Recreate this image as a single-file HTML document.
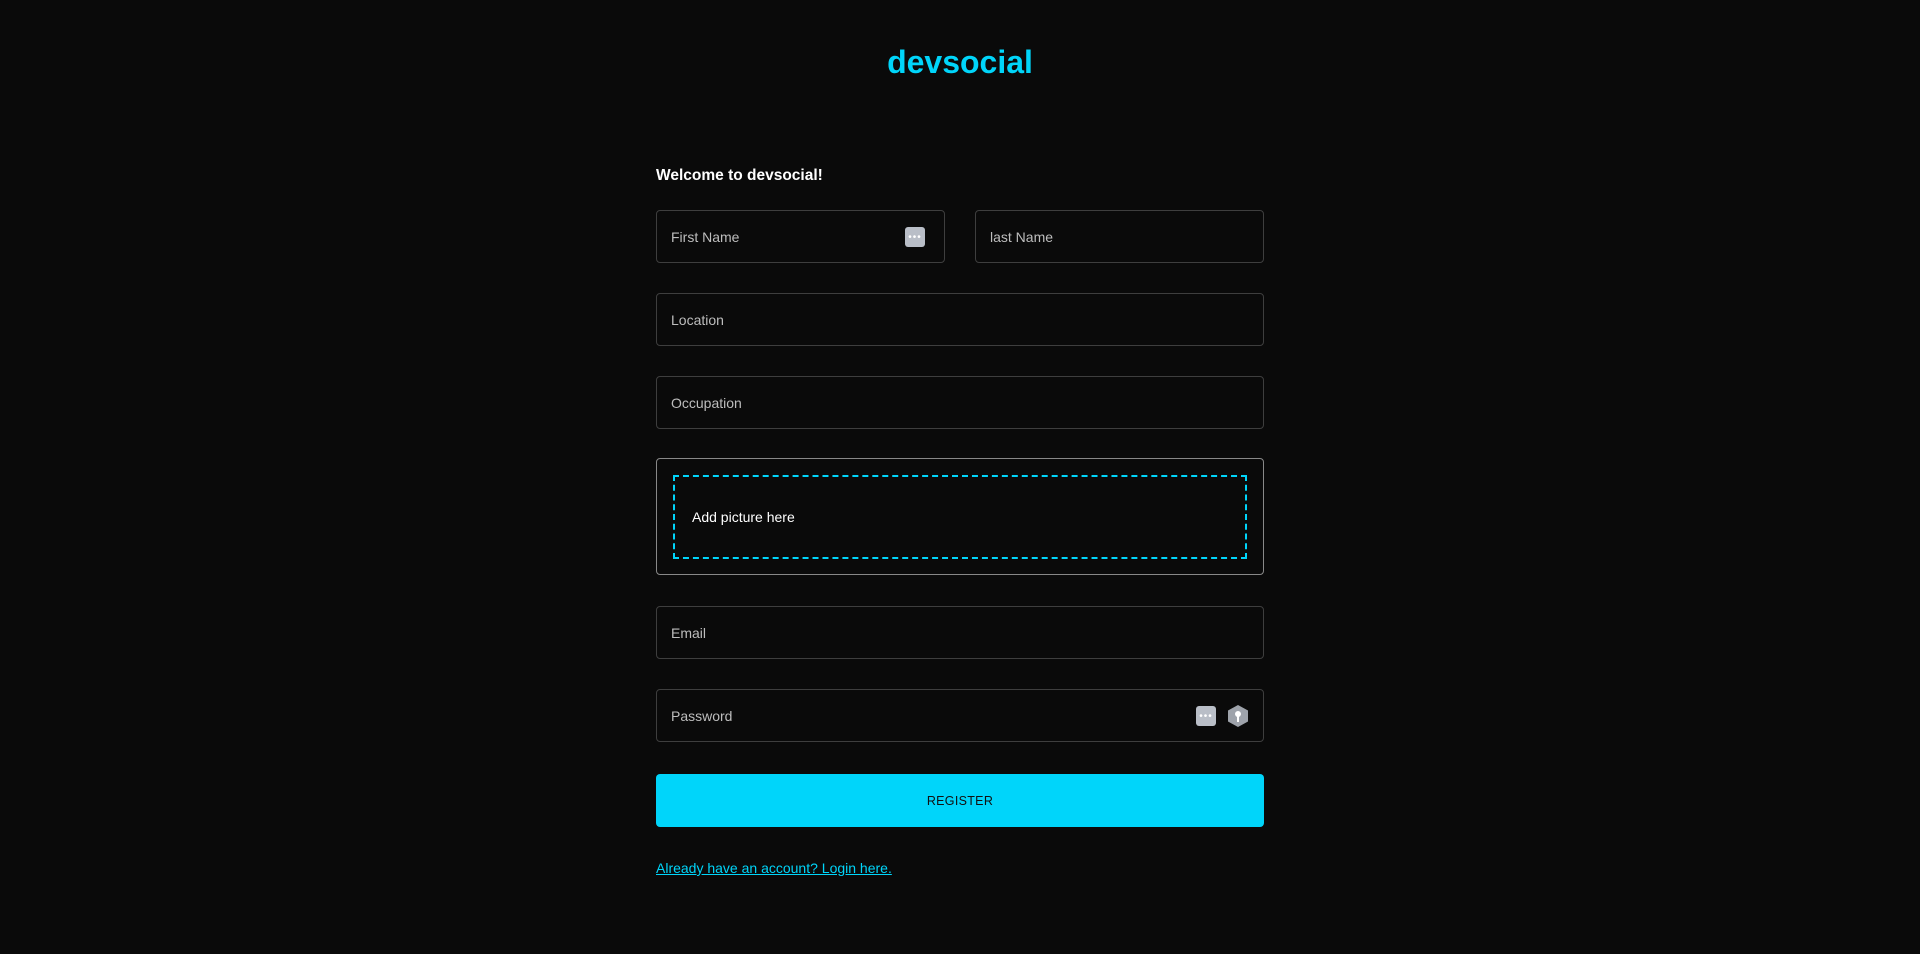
<!DOCTYPE html>
<html><head><meta charset="utf-8"><style>
html,body{margin:0;padding:0;background:#0a0a0a;width:1920px;height:954px;overflow:hidden;font-family:"Liberation Sans",sans-serif}
.abs{position:absolute}
.logo{left:0;width:1920px;top:44px;text-align:center;color:#00d5fa;font-weight:bold;font-size:32px}
.welcome{left:656px;top:167px;color:#fff;font-weight:bold;font-size:15.5px}
.in{border:1px solid #3e3e3e;border-radius:4px;box-sizing:border-box;color:#bdbdbd;font-size:14px;padding-left:14px;display:flex;align-items:center}
.key{background:#b9bec7;border-radius:3px;width:20px;height:20px;position:absolute;display:flex;align-items:center;justify-content:center;color:#fff;font-size:10px;letter-spacing:1px}
</style></head><body>
<div class="abs logo">devsocial</div>
<div class="abs welcome">Welcome to devsocial!</div>
<div class="abs in" style="left:656px;top:210px;width:289px;height:53px">First Name<div class="key" style="left:248px;top:16px">•••</div></div>
<div class="abs in" style="left:975px;top:210px;width:289px;height:53px">last Name</div>
<div class="abs in" style="left:656px;top:293px;width:608px;height:53px">Location</div>
<div class="abs in" style="left:656px;top:376px;width:608px;height:53px">Occupation</div>
<div class="abs in" style="left:656px;top:458px;width:608px;height:117px;border-color:#888"></div>
<div class="abs" style="left:673px;top:475px;width:574px;height:84px;box-sizing:border-box;border:2px dashed #00d5fa;color:#fff;font-size:14px;display:flex;align-items:center;padding-left:17px">Add picture here</div>
<div class="abs in" style="left:656px;top:606px;width:608px;height:53px">Email</div>
<div class="abs in" style="left:656px;top:689px;width:608px;height:53px">Password
<div class="key" style="left:539px;top:16px">•••</div>
<svg class="abs" style="left:570px;top:14px" width="22" height="24" viewBox="0 0 22 24"><polygon points="11,1 21,6.5 21,17.5 11,23 1,17.5 1,6.5" fill="#9ea3ab"/><circle cx="11" cy="10" r="3" fill="#fff"/><rect x="10" y="11" width="2" height="7" fill="#fff"/></svg>
</div>
<div class="abs" style="left:656px;top:774px;width:608px;height:53px;background:#00d5fa;border-radius:4px;display:flex;align-items:center;justify-content:center;color:#111;font-size:12.5px;letter-spacing:0.3px">REGISTER</div>
<div class="abs" style="left:656px;top:860px;color:#00d5fa;font-size:14px;text-decoration:underline">Already have an account? Login here.</div>
</body></html>
